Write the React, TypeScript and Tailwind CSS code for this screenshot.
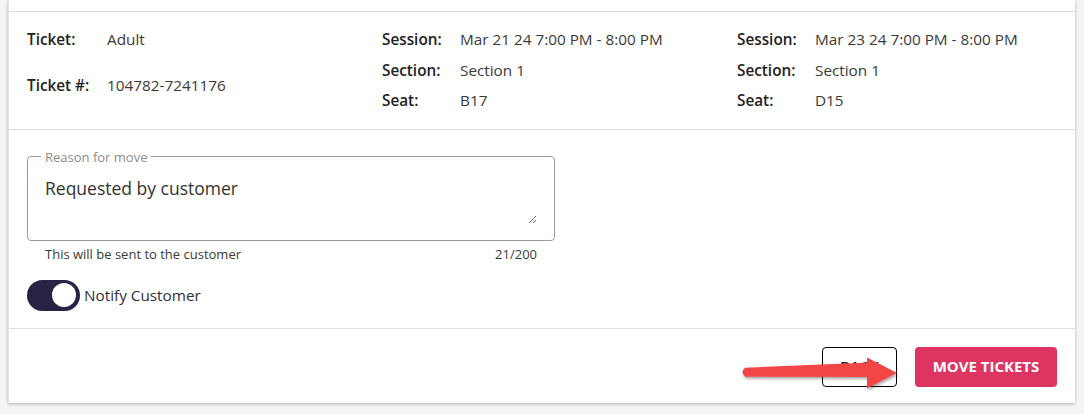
import React from 'react';

const font = { fontFamily: '"Open Sans", "Noto Sans", Arial, sans-serif' };

function Row({ label, value, className = '' }: { label: string; value: string; className?: string }) {
  return (
    <div className={`flex leading-[30.5px] text-[15.3px] ${className}`}>
      <span className="w-[78px] shrink-0 font-semibold text-[#222]">{label}</span>
      <span className="text-[#3a3a3a]">{value}</span>
    </div>
  );
}

function App() {
  return (
    <div className="h-[414px] bg-[#f4f4f4] pl-[8px] pr-[9px] overflow-hidden" style={font}>
      <div className="bg-white border-l border-[#e4e4e4] shadow-[0_1px_3px_rgba(0,0,0,0.28)]">
        {/* top strip */}
        <div className="h-[12px] border-b border-[#dedede]" />

        {/* ticket info */}
        <div className="grid grid-cols-[355px_355px_1fr] pl-[18px] pt-[12px] pb-[13px] border-b border-[#dedede]">
          <div>
            <div className="flex leading-[30.5px] text-[15.3px]">
              <span className="w-[80px] shrink-0 font-semibold text-[#222]">Ticket:</span>
              <span className="text-[#3a3a3a]">Adult</span>
            </div>
            <div className="flex leading-[30.5px] text-[15.3px] mt-[15px]">
              <span className="w-[80px] shrink-0 font-semibold text-[#222]">Ticket #:</span>
              <span className="text-[#3a3a3a]">104782-7241176</span>
            </div>
          </div>
          <div>
            <Row label="Session:" value="Mar 21 24 7:00 PM - 8:00 PM" />
            <Row label="Section:" value="Section 1" />
            <Row label="Seat:" value="B17" />
          </div>
          <div>
            <Row label="Session:" value="Mar 23 24 7:00 PM - 8:00 PM" />
            <Row label="Section:" value="Section 1" />
            <Row label="Seat:" value="D15" />
          </div>
        </div>

        {/* reason + notify */}
        <div className="pl-[18px] pt-[19px] pb-[17px] border-b border-[#dedede]">
          <div className="w-[528px]">
            <fieldset className="border border-[#9b9b9b] rounded-[4px] px-[17px] pb-[16px]">
              <legend className="-ml-[4px] px-[4px] text-[13px] leading-[16px] text-[#8c8c8c]">
                Reason for move
              </legend>
              <textarea
                className="block w-full h-[48px] mt-[11px] resize-y bg-transparent outline-none text-[17.5px] leading-[24px] text-[#333]"
                style={font}
                defaultValue="Requested by customer"
              />
            </fieldset>
            <div className="flex justify-between px-[18px] mt-[5px] text-[13px] leading-[16px] text-[#3a3a3a]">
              <span>This will be sent to the customer</span>
              <span>21/200</span>
            </div>
          </div>
          <div className="flex items-center mt-[18px]">
            <div className="w-[53px] h-[31px] rounded-full bg-[#292245] flex items-center justify-end pr-[4px]">
              <div className="w-[24px] h-[24px] rounded-full bg-white" />
            </div>
            <span className="ml-[4px] text-[15.3px] text-[#2f2f3a]">Notify Customer</span>
          </div>
        </div>

        {/* footer */}
        <div className="relative flex justify-end gap-[18px] pr-[18px] pt-[18px] pb-[16px]">
          <button className="w-[75px] h-[40px] rounded-[4px] border border-black bg-white text-[15px] font-semibold text-[#222]">
            BACK
          </button>
          <button className="w-[142px] h-[40px] rounded-[4px] bg-[#de3462] text-[15px] font-bold text-white">
            MOVE TICKETS
          </button>
          <svg
            className="absolute left-[724px] top-[22px] pointer-events-none"
            width="176"
            height="46"
            viewBox="0 0 176 46"
          >
            <defs>
              <filter id="sh" x="-10%" y="-30%" width="130%" height="170%">
                <feDropShadow dx="1" dy="2" stdDeviation="1.6" floodColor="#000" floodOpacity="0.35" />
              </filter>
            </defs>
            <g filter="url(#sh)" fill="#f24444">
              <path d="M12 16.7 L137 11.5 L137 26 L12 25.7 Q7 21 12 16.7 Z" />
              <path d="M134 6.5 L164 22 L134 37.5 Z" />
            </g>
          </svg>
        </div>
      </div>
    </div>
  );
}

export default App;
